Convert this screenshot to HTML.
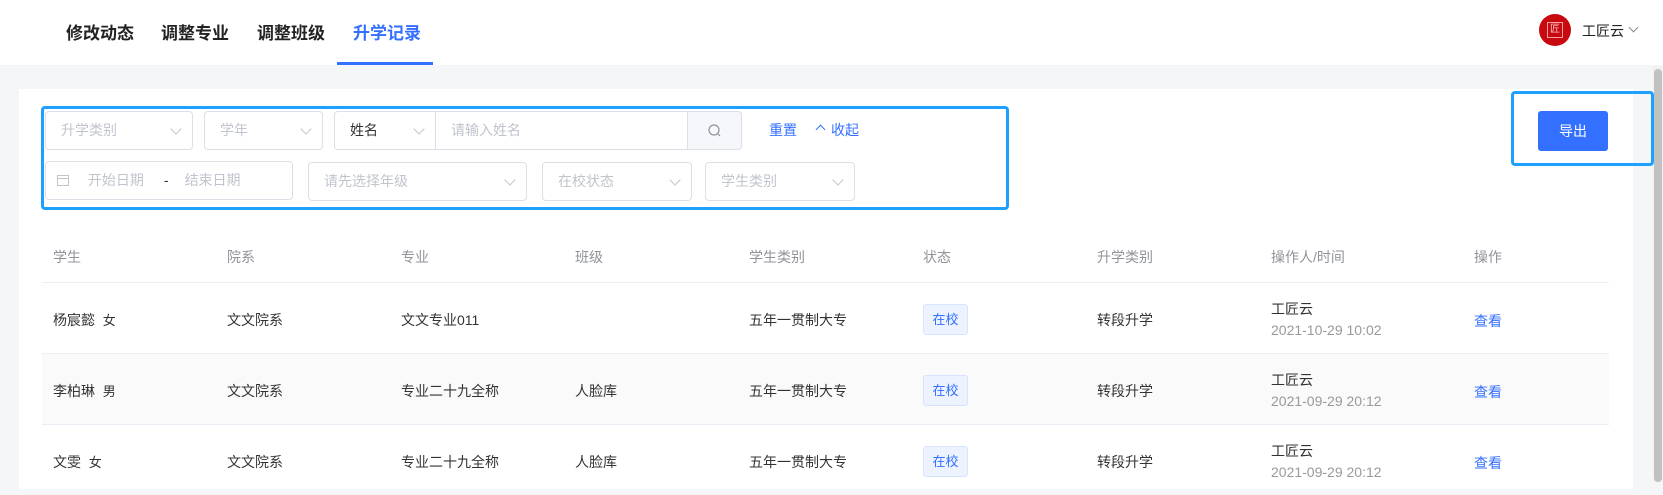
<!DOCTYPE html>
<html><head><meta charset="utf-8"><style>
*{box-sizing:border-box;margin:0;padding:0}
body{width:1663px;height:482px;overflow:hidden;background:#f5f6f8;font-family:"Liberation Sans","Noto Sans CJK SC",sans-serif;font-size:14px;color:#333;position:relative}
.abs{position:absolute}
.nav{left:0;top:0;width:1663px;height:65px;background:#fff}
.tab{top:19px;font-size:17px;font-weight:600;color:#222}
.card{left:19px;top:89px;width:1614px;height:400px;background:#fff}
.sel{border:1px solid #dcdfe6;border-radius:4px;height:39px;color:#c0c4cc;font-size:14px;line-height:37px;padding-left:15px;background:#fff}
.chev{position:absolute;right:12px;top:13px;width:8px;height:8px;border-right:1px solid #c0c4cc;border-bottom:1px solid #c0c4cc;transform:rotate(45deg)}
.th{top:247px;color:#909399;font-size:14px}
.row{left:42px;width:1567px;height:71px;border-top:1px solid #ebeef5}
.c{position:absolute;font-size:14px;color:#333}
.tag{position:absolute;width:45px;height:31px;background:#ecf3ff;border:1px solid #d6e4ff;border-radius:3px;color:#3370ff;font-size:13px;text-align:center;line-height:29px}
.time{color:#999}
.lnk{color:#3370ff}
</style></head><body>
<div class="abs nav"></div>
<div class="abs tab" style="left:66px">修改动态</div>
<div class="abs tab" style="left:161px">调整专业</div>
<div class="abs tab" style="left:257px">调整班级</div>
<div class="abs tab" style="left:353px;color:#3370ff">升学记录</div>
<div class="abs" style="left:337px;top:62px;width:96px;height:3px;background:#3370ff"></div>
<div class="abs" style="left:1539px;top:14px;width:32px;height:32px;border-radius:50%;background:#c8090f"></div>
<div class="abs" style="left:1547px;top:22px;width:16px;height:16px;border:1px solid #f3a0a0;color:#f3c0c0;font-size:10px;line-height:14px;text-align:center">匠</div>
<div class="abs" style="left:1582px;top:21px;font-size:14px;color:#222">工匠云</div>
<div class="abs" style="left:1630px;top:24px;width:7px;height:7px;border-right:1px solid #888;border-bottom:1px solid #888;transform:rotate(45deg)"></div>
<div class="abs" style="left:1653px;top:66px;width:10px;height:416px;background:#f1f1f1"></div>
<div class="abs" style="left:1654px;top:69px;width:8px;height:413px;background:#c1c1c1;border-radius:4px"></div>
<div class="abs card"></div>

<div class="abs" style="left:41px;top:106px;width:968px;height:104px;border:3px solid #1ea0ff;border-radius:4px"></div>
<div class="abs sel" style="left:45px;top:111px;width:148px">升学类别<i class="chev"></i></div>
<div class="abs sel" style="left:204px;top:111px;width:119px">学年<i class="chev"></i></div>
<div class="abs sel" style="left:334px;top:111px;width:102px;color:#333;border-radius:4px 0 0 4px">姓名<i class="chev"></i></div>
<div class="abs sel" style="left:435px;top:111px;width:253px;border-radius:0">请输入姓名</div>
<div class="abs sel" style="left:687px;top:111px;width:55px;background:#f5f7fa;border-radius:0 4px 4px 0;padding:0">
<svg width="55" height="37"><circle cx="26" cy="18" r="5" fill="none" stroke="#909399" stroke-width="1.2"/><line x1="30" y1="22" x2="32" y2="24" stroke="#909399" stroke-width="1.2"/></svg></div>
<div class="abs" style="left:769px;top:120px;color:#3370ff">重置</div>
<div class="abs" style="left:817px;top:126px;width:7px;height:7px;border-left:1px solid #3370ff;border-top:1px solid #3370ff;transform:rotate(45deg)"></div>
<div class="abs" style="left:831px;top:120px;color:#3370ff">收起</div>

<div class="abs sel" style="left:45px;top:161px;width:248px;padding-left:10px">
<svg width="14" height="14" style="vertical-align:-2px"><rect x="1.5" y="2.5" width="11" height="10" fill="none" stroke="#c0c4cc"/><line x1="1.5" y1="5.5" x2="12.5" y2="5.5" stroke="#c0c4cc"/></svg>
<span style="margin-left:14px">开始日期</span><span style="margin-left:20px;color:#333">-</span><span style="margin-left:16px">结束日期</span></div>
<div class="abs sel" style="left:308px;top:162px;width:219px">请先选择年级<i class="chev"></i></div>
<div class="abs sel" style="left:542px;top:162px;width:150px">在校状态<i class="chev"></i></div>
<div class="abs sel" style="left:705px;top:162px;width:150px">学生类别<i class="chev"></i></div>

<div class="abs" style="left:1511px;top:91px;width:143px;height:75px;border:3px solid #1ea0ff;border-radius:4px"></div>
<div class="abs" style="left:1538px;top:111px;width:70px;height:40px;background:#3370ff;border-radius:3px;color:#fff;text-align:center;line-height:40px;font-size:14px">导出</div>

<div class="abs th" style="left:53px">学生</div>
<div class="abs th" style="left:227px">院系</div>
<div class="abs th" style="left:401px">专业</div>
<div class="abs th" style="left:575px">班级</div>
<div class="abs th" style="left:749px">学生类别</div>
<div class="abs th" style="left:923px">状态</div>
<div class="abs th" style="left:1097px">升学类别</div>
<div class="abs th" style="left:1271px">操作人/时间</div>
<div class="abs th" style="left:1474px">操作</div>

<div class="abs row" style="top:282px"><div class="c" style="left:11px;top:27px">杨宸懿 &nbsp;<span style="font-size:13px">女</span></div><div class="c" style="left:185px;top:27px">文文院系</div><div class="c" style="left:359px;top:27px">文文专业011</div><div class="c" style="left:707px;top:27px">五年一贯制大专</div><div class="tag" style="left:881px;top:21px">在校</div><div class="c" style="left:1055px;top:27px">转段升学</div><div class="c" style="left:1229px;top:16px">工匠云</div><div class="c time" style="left:1229px;top:39px">2021-10-29 10:02</div><div class="c lnk" style="left:1432px;top:28px">查看</div></div>
<div class="abs row" style="top:353px;background:#fafafa"><div class="c" style="left:11px;top:27px">李柏琳 &nbsp;<span style="font-size:13px">男</span></div><div class="c" style="left:185px;top:27px">文文院系</div><div class="c" style="left:359px;top:27px">专业二十九全称</div><div class="c" style="left:533px;top:27px">人脸库</div><div class="c" style="left:707px;top:27px">五年一贯制大专</div><div class="tag" style="left:881px;top:21px">在校</div><div class="c" style="left:1055px;top:27px">转段升学</div><div class="c" style="left:1229px;top:16px">工匠云</div><div class="c time" style="left:1229px;top:39px">2021-09-29 20:12</div><div class="c lnk" style="left:1432px;top:28px">查看</div></div>
<div class="abs row" style="top:424px"><div class="c" style="left:11px;top:27px">文雯 &nbsp;<span style="font-size:13px">女</span></div><div class="c" style="left:185px;top:27px">文文院系</div><div class="c" style="left:359px;top:27px">专业二十九全称</div><div class="c" style="left:533px;top:27px">人脸库</div><div class="c" style="left:707px;top:27px">五年一贯制大专</div><div class="tag" style="left:881px;top:21px">在校</div><div class="c" style="left:1055px;top:27px">转段升学</div><div class="c" style="left:1229px;top:16px">工匠云</div><div class="c time" style="left:1229px;top:39px">2021-09-29 20:12</div><div class="c lnk" style="left:1432px;top:28px">查看</div></div>
</body></html>
